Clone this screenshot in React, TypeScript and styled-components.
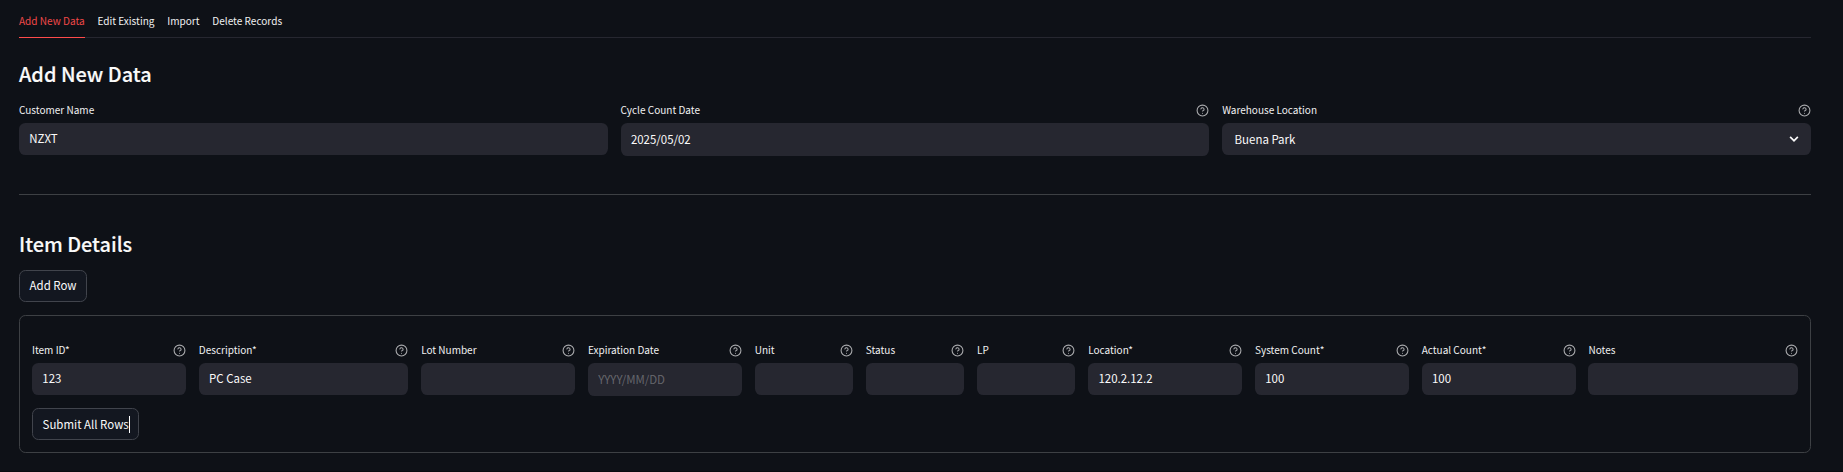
import React from 'react';
import styled, { createGlobalStyle } from 'styled-components';

const GlobalStyle = createGlobalStyle`
  * { box-sizing: border-box; }
  body {
    margin: 0;
    background: #0e1117;
    color: #fafafa;
    font-family: "Noto Sans CJK SC", "Noto Sans", sans-serif;
  }
`;

const Page = styled.main`
  height: 472px;
  overflow: hidden;
  padding: 0 32px 0 19px;
  border-bottom: 1px solid #0a0b0f;
`;

const TabList = styled.nav`
  display: flex;
  gap: 12.8px;
  height: 38px;
  border-bottom: 1px solid #262730;
`;

const Tab = styled.a<{ $active?: boolean }>`
  height: 38px;
  padding-top: 13px;
  font-size: 10.05px;
  line-height: 16px;
  white-space: nowrap;
  color: ${(p) => (p.$active ? '#f04848' : '#f0f0f1')};
  border-bottom: 1px solid ${(p) => (p.$active ? '#ff4b4b' : 'transparent')};
`;

const Heading = styled.h2`
  margin: 0;
  height: 28px;
  font-size: 19.9px;
  font-weight: 500;
  line-height: 28px;
  -webkit-text-stroke: 0.15px currentColor;
`;

const FormSection = styled.section`
  padding-top: 22px;
`;

const DetailsSection = styled.section`
  padding-top: 35px;
`;

const Columns = styled.div`
  display: flex;
  gap: 12.8px;
`;

const Column = styled.div<{ $weight: number; $total: number }>`
  min-width: 0;
  flex: ${(p) => p.$weight} 1 calc(${(p) => (p.$weight / p.$total) * 100}% - 12.8px);
`;

const TopColumns = styled(Columns)`
  margin-top: 14px;
`;

const LabelRow = styled.div`
  display: flex;
  align-items: center;
  justify-content: space-between;
  height: 16px;
  margin-bottom: 5px;
  color: #f0f0f1;
  font-size: 10.03px;
  line-height: 16px;
  white-space: nowrap;
`;

const TextBox = styled.div`
  height: 32px;
  padding: 0 10.3px;
  border-radius: 6.4px;
  background: #262730;
  font-size: 11.46px;
  line-height: 30px;
  white-space: nowrap;
`;

const DateBox = styled(TextBox)<{ $empty: boolean }>`
  height: 33px;
  line-height: 32px;
  color: ${(p) => (p.$empty ? 'rgba(250, 250, 250, 0.3)' : '#fafafa')};
`;

const SelectBox = styled(TextBox)`
  display: flex;
  align-items: center;
  justify-content: space-between;
  padding: 0 9.4px 0 12.4px;
  line-height: 32px;
`;

const Divider = styled.hr`
  height: 1px;
  margin: 38px 0 0;
  border: 0;
  background: #3d4044;
`;

const Button = styled.button`
  position: relative;
  display: block;
  height: 32px;
  padding: 0 9.6px;
  border: 1px solid #41444c;
  border-radius: 6.4px;
  background: #131720;
  color: #fafafa;
  font-family: inherit;
  font-size: 11.46px;
  line-height: 30px;
  white-space: nowrap;
`;

const AddRowButton = styled(Button)`
  margin-top: 12px;
  padding-bottom: 2px;
  line-height: 28px;
`;

const SubmitButton = styled(Button)`
  margin-top: 12px;
`;

const Caret = styled.span`
  position: absolute;
  top: 7px;
  right: 8px;
  width: 1px;
  height: 17px;
  background: #ffffff;
`;

const Panel = styled.div`
  height: 138px;
  margin-top: 13px;
  padding: 26px 12px 0;
  border: 1px solid #3d4044;
  border-radius: 6.4px;
`;

const IconSvg = styled.svg`
  display: block;
  flex: none;
`;

const HelpIcon = () => (
  <IconSvg width="13" height="13" viewBox="0 0 24 24" fill="none" stroke="#a9aaad" strokeWidth="2" strokeLinecap="round" strokeLinejoin="round">
    <circle cx="12" cy="12" r="10" />
    <path d="M9.09 9a3 3 0 0 1 5.83 1c0 2-3 3-3 3" />
    <path d="M12 17h.01" />
  </IconSvg>
);

const ChevronIcon = () => (
  <IconSvg width="16" height="16" viewBox="0 0 24 24" fill="#fafafa">
    <path d="M16.9 7.9 12 12.8 7.1 7.9 5.3 9.7 12 16.4l6.7-6.7z" />
  </IconSvg>
);

type FieldProps = {
  label: string;
  value?: string;
  kind?: 'text' | 'date' | 'select';
  help?: boolean;
  weight?: number;
  total: number;
};

const Field = ({ label, value = '', kind = 'text', help = true, weight = 1, total }: FieldProps) => (
  <Column $weight={weight} $total={total}>
    <LabelRow>
      <span>{label}</span>
      {help && <HelpIcon />}
    </LabelRow>
    {kind === 'text' && <TextBox>{value}</TextBox>}
    {kind === 'date' && <DateBox $empty={!value}>{value || 'YYYY/MM/DD'}</DateBox>}
    {kind === 'select' && (
      <SelectBox>
        <span>{value}</span>
        <ChevronIcon />
      </SelectBox>
    )}
  </Column>
);

const itemFields: Omit<FieldProps, 'total'>[] = [
  { label: 'Item ID*', value: '123', weight: 1.5 },
  { label: 'Description*', value: 'PC Case', weight: 2 },
  { label: 'Lot Number', weight: 1.5 },
  { label: 'Expiration Date', kind: 'date', weight: 1.5 },
  { label: 'Unit' },
  { label: 'Status' },
  { label: 'LP' },
  { label: 'Location*', value: '120.2.12.2', weight: 1.5 },
  { label: 'System Count*', value: '100', weight: 1.5 },
  { label: 'Actual Count*', value: '100', weight: 1.5 },
  { label: 'Notes', weight: 2 },
];
const totalWeight = itemFields.reduce((sum, f) => sum + (f.weight ?? 1), 0);

export default function App() {
  return (
    <Page>
      <GlobalStyle />
      <TabList>
        <Tab $active>Add New Data</Tab>
        <Tab>Edit Existing</Tab>
        <Tab>Import</Tab>
        <Tab>Delete Records</Tab>
      </TabList>
      <FormSection>
        <Heading>Add New Data</Heading>
        <TopColumns>
          <Field label="Customer Name" value="NZXT" help={false} total={3} />
          <Field label="Cycle Count Date" value="2025/05/02" kind="date" total={3} />
          <Field label="Warehouse Location" value="Buena Park" kind="select" total={3} />
        </TopColumns>
      </FormSection>
      <Divider />
      <DetailsSection>
        <Heading>Item Details</Heading>
        <AddRowButton>Add Row</AddRowButton>
        <Panel>
          <Columns>
            {itemFields.map((field) => (
              <Field key={field.label} {...field} total={totalWeight} />
            ))}
          </Columns>
          <SubmitButton>
            Submit All Rows
            <Caret />
          </SubmitButton>
        </Panel>
      </DetailsSection>
    </Page>
  );
}
